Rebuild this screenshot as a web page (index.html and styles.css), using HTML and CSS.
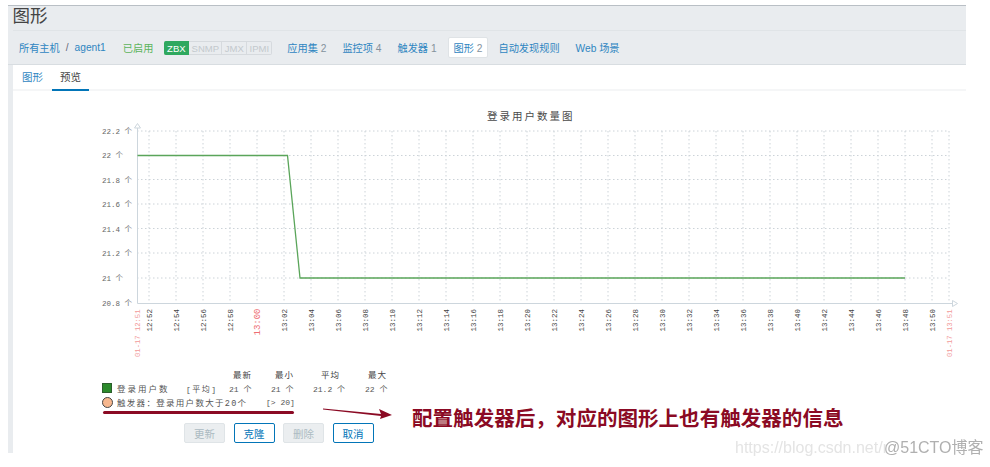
FILE: index.html
```html
<!DOCTYPE html>
<html lang="zh-CN">
<head>
  <meta charset="UTF-8">
  <meta name="viewport" content="width=device-width, initial-scale=1.0">
  <title>图形</title>
  <link rel="stylesheet" href="styles.css">
</head>
<body>
  <div class="page">
    <header class="header">
      <h1 class="title">图形</h1>
      <nav class="host-nav">
        <a class="crumb">所有主机</a>
        <span class="crumb-sep">/</span>
        <a class="crumb">agent1</a>
        <span class="enabled">已启用</span>
        <div class="badges">
          <span class="badge badge-on">ZBX</span>
          <span class="badge badge-snmp">SNMP</span>
          <span class="badge badge-jmx">JMX</span>
          <span class="badge badge-ipmi">IPMI</span>
        </div>
        <a class="nav-item nav-apps">应用集 <em>2</em></a>
        <a class="nav-item">监控项 <em>4</em></a>
        <a class="nav-item">触发器 <em>1</em></a>
        <a class="nav-item nav-current">图形 <em>2</em></a>
        <a class="nav-item">自动发现规则</a>
        <a class="nav-item">Web 场景</a>
      </nav>
    </header>

    <main class="content">
      <div class="tabs">
        <a class="tab">图形</a>
        <a class="tab tab-active">预览</a>
      </div>

      <svg class="chart" viewBox="13 91 953 276" width="953" height="276">
        <text class="chart-title" x="487" y="120">登录用户数量图</text>

        <path class="grid" d="M137 131H949M137 155.5H949M137 179.5H949M137 204H949M137 228.500H949M137 253H949M137 278H949"/>
        <path class="grid" d="M149 131V303M176 131V303M203 131V303M230 131V303M257 131V303M284 131V303M311 131V303M338 131V303M365 131V303M392 131V303M419 131V303M446 131V303M473 131V303M500 131V303M527 131V303M554 131V303M581 131V303M608 131V303M635 131V303M662 131V303M689 131V303M716 131V303M743 131V303M770 131V303M797 131V303M824 131V303M851 131V303M878 131V303M905 131V303M932 131V303M949 131V303"/>

        <path class="axis" d="M137.500 128V303.500H952"/>
        <path class="axis-arrow" d="M137.500 123.500L140.500 128H134.500Z"/>
        <path class="axis-arrow" d="M957.500 303.500L952.500 300.500V306.500Z"/>

        <path class="series" d="M137.500 155.500H287.500L300 278H905"/>

        <g class="y-labels">
          <text x="102" y="134">22.2 个</text>
          <text x="102" y="158">22 个</text>
          <text x="102" y="183">21.8 个</text>
          <text x="102" y="207">21.6 个</text>
          <text x="102" y="232">21.4 个</text>
          <text x="102" y="256">21.2 个</text>
          <text x="102" y="281">21 个</text>
          <text x="102" y="306">20.8 个</text>
        </g>

        <g class="x-labels">
          <text transform="translate(152 331.500) rotate(-90)">12:52</text>
          <text transform="translate(179 331.500) rotate(-90)">12:54</text>
          <text transform="translate(206 331.500) rotate(-90)">12:56</text>
          <text transform="translate(233 331.500) rotate(-90)">12:58</text>
          <text class="x-hour" transform="translate(260 335.500) rotate(-90)">13:00</text>
          <text transform="translate(287 331.500) rotate(-90)">13:02</text>
          <text transform="translate(314 331.500) rotate(-90)">13:04</text>
          <text transform="translate(341 331.500) rotate(-90)">13:06</text>
          <text transform="translate(368 331.500) rotate(-90)">13:08</text>
          <text transform="translate(395 331.500) rotate(-90)">13:10</text>
          <text transform="translate(422 331.500) rotate(-90)">13:12</text>
          <text transform="translate(449 331.500) rotate(-90)">13:14</text>
          <text transform="translate(476 331.500) rotate(-90)">13:16</text>
          <text transform="translate(503 331.500) rotate(-90)">13:18</text>
          <text transform="translate(530 331.500) rotate(-90)">13:20</text>
          <text transform="translate(557 331.500) rotate(-90)">13:22</text>
          <text transform="translate(584 331.500) rotate(-90)">13:24</text>
          <text transform="translate(611 331.500) rotate(-90)">13:26</text>
          <text transform="translate(638 331.500) rotate(-90)">13:28</text>
          <text transform="translate(665 331.500) rotate(-90)">13:30</text>
          <text transform="translate(692 331.500) rotate(-90)">13:32</text>
          <text transform="translate(719 331.500) rotate(-90)">13:34</text>
          <text transform="translate(746 331.500) rotate(-90)">13:36</text>
          <text transform="translate(773 331.500) rotate(-90)">13:38</text>
          <text transform="translate(800 331.500) rotate(-90)">13:40</text>
          <text transform="translate(827 331.500) rotate(-90)">13:42</text>
          <text transform="translate(854 331.500) rotate(-90)">13:44</text>
          <text transform="translate(881 331.500) rotate(-90)">13:46</text>
          <text transform="translate(908 331.500) rotate(-90)">13:48</text>
          <text transform="translate(935 331.500) rotate(-90)">13:50</text>
          <text class="x-edge" transform="translate(140 357) rotate(-90)">01-17 12:51</text>
          <text class="x-edge" transform="translate(952 357) rotate(-90)">01-17 13:51</text>
        </g>
      </svg>

      <div class="legend">
        <div class="legend-row legend-head">
          <span>最新</span>
          <span>最小</span>
          <span>平均</span>
          <span>最大</span>
        </div>
        <div class="legend-row">
          <i class="swatch"></i>
          <span class="legend-name">登录用户数</span>
          <span class="legend-func">[平均]</span>
          <span class="legend-val">21 个</span>
          <span class="legend-val">21 个</span>
          <span class="legend-val legend-val-wide">21.2 个</span>
          <span class="legend-val">22 个</span>
        </div>
        <div class="legend-row legend-trigger">
          <i class="dot"></i>
          <span class="trigger-name">触发器：登录用户数大于20个</span>
          <span class="trigger-cond">[&gt; 20]</span>
        </div>
      </div>

      <div class="actions">
        <button class="btn" disabled>更新</button>
        <button class="btn">克隆</button>
        <button class="btn" disabled>删除</button>
        <button class="btn">取消</button>
      </div>
    </main>

    <div class="mark-line"></div>
    <svg class="mark-arrow" viewBox="0 0 72 14" width="72" height="14">
      <path d="M0 1.500L58 7L56 2L69 8L57 12L58 9L0 2.500Z"/>
    </svg>
    <div class="note">配置触发器后，对应的图形上也有触发器的信息</div>
    <div class="watermark">https://blog.csdn.net/r<b>@51CTO博客</b></div>
  </div>
</body>
</html>
```

FILE: styles.css
```css
body {
  margin: 0;
  background-color: white;
  font-family: "Liberation Sans", "Noto Sans CJK SC", sans-serif;
}
.page {
  position: relative;
  width: 958px;
  height: 467px;
  margin-left: 8px;
  padding-top: 5px;
  box-sizing: border-box;
  filter: blur(.3px);
}
.header {
  background-color: #e9ecef;
  border-top: 1px solid #b9bfc5;
  border-bottom: 1px solid #d8dde1;
}
.title {
  margin: 0 0 0 4.500px;
  height: 24px;
  border-bottom: 1px solid #e0e4e7;
  font-size: 17.500px;
  font-weight: normal;
  line-height: 20px;
  color: #444;
}
.host-nav {
  display: flex;
  align-items: center;
  height: 33px;
  padding-left: 11px;
  font-size: 10.200px;
  color: #2f86c1;
}
.crumb-sep {
  margin: 0 6px;
  color: #667;
}
.enabled {
  margin-left: 17px;
  color: #5cb45c;
}
.badges {
  display: flex;
  margin-left: 11px;
  font-size: 9.500px;
}
.badge {
  height: 14px;
  line-height: 13px;
  box-sizing: border-box;
  text-align: center;
  color: #c3c9cd;
  border: 1px solid #d6dade;
  border-left: 0;
}
.badge-on {
  width: 25px;
  background-color: #2fa85f;
  border-color: #2fa85f;
  border-radius: 2px 0 0 2px;
  color: white;
}
.badge-snmp { width: 33px; }
.badge-jmx { width: 25px; }
.badge-ipmi { width: 25px; border-radius: 0 2px 2px 0; }
.nav-item {
  margin-left: 16px;
  white-space: nowrap;
}
.nav-item em {
  font-style: normal;
  color: #84929c;
}
.nav-apps { margin-left: 15px; }
.nav-current {
  margin-left: 11px;
  margin-right: -6px;
  padding: 2px 5px;
  background-color: white;
  border: 1px solid #dfe3e6;
  border-radius: 2px;
}
.content {
  height: 388px;
  border-left: 5px solid #e9ecef;
  background-color: white;
}
.tabs {
  display: flex;
  height: 26px;
  padding-left: 9px;
  box-sizing: border-box;
  border-bottom: 2px solid #f5f6f7;
  font-size: 10.500px;
  line-height: 24px;
  color: #2f86c1;
}
.tab {
  width: 30px;
}
.tab-active {
  width: 37px;
  height: 26px;
  box-sizing: border-box;
  text-align: center;
  color: #444;
  border-bottom: 2px solid #0275b8;
}
.chart {
  display: block;
}
.chart text {
  font-family: "Liberation Mono", "Noto Sans CJK SC", monospace;
}
.chart .chart-title {
  font-family: "Liberation Serif", "Noto Sans CJK SC", serif;
  font-size: 10.500px;
  letter-spacing: 2px;
  fill: #4a4a4a;
}
.grid {
  fill: none;
  stroke: #ccd3d8;
  stroke-width: 1;
  stroke-dasharray: 1.500 2.500;
}
.axis {
  fill: none;
  stroke: #cdd6dd;
  stroke-width: 1;
}
.axis-arrow {
  fill: white;
  stroke: #cdd6dd;
  stroke-width: 1;
}
.series {
  fill: none;
  stroke: #5aa55a;
  stroke-width: 1.300;
}
.y-labels text {
  font-size: 7.500px;
  fill: #666;
}
.x-labels text {
  font-size: 7.500px;
  fill: #444;
}
.x-labels .x-hour {
  font-size: 9px;
  fill: #ee6e73;
}
.x-labels .x-edge {
  font-size: 7.200px;
  fill: #f29a9a;
}
.legend {
  padding-top: 1px;
  padding-left: 89px;
  font-family: "Liberation Mono", "Noto Sans CJK SC", monospace;
  font-size: 8px;
  color: #555;
}
.legend-row {
  display: flex;
  align-items: center;
  height: 14px;
}
.legend-head {
  height: 13px;
  padding-left: 131px;
  font-size: 8.500px;
  color: #444;
}
.legend-head span {
  width: 42px;
  letter-spacing: 1px;
}
.legend-head span:nth-child(2) { width: 46px; }
.legend-head span:nth-child(3) { width: 47px; }
.swatch {
  width: 10px;
  height: 10px;
  margin-right: 5px;
  box-sizing: border-box;
  background-color: #2b8a2b;
  border: 1px solid #2c5e2c;
}
.legend-name {
  width: 69px;
  font-size: 8.500px;
  letter-spacing: 2px;
}
.legend-func {
  width: 43px;
  letter-spacing: 1.500px;
}
.legend-val {
  width: 42px;
}
.legend-val-wide {
  width: 52px;
}
.legend-trigger {
  height: 15px;
}
.dot {
  width: 11px;
  height: 11px;
  margin-right: 4px;
  box-sizing: border-box;
  border-radius: 50%;
  background-color: #f7b78e;
  border: 1px solid #444;
}
.trigger-name {
  width: 149px;
  font-size: 8.500px;
  letter-spacing: 1.300px;
}
.actions {
  display: flex;
  gap: 8.500px;
  margin-top: 13px;
  padding-left: 171px;
}
.btn {
  width: 41px;
  height: 20px;
  padding: 0;
  box-sizing: border-box;
  background-color: white;
  border: 1px solid #0275b8;
  border-radius: 2px;
  font-family: inherit;
  font-size: 10.500px;
  color: #0275b8;
}
.btn:disabled {
  background-color: #ebeef0;
  border-color: #dfe4e7;
  color: #acbbc2;
}
/* hand drawn marks on top of the screenshot */
.mark-line {
  position: absolute;
  left: 95px;
  top: 411px;
  width: 191px;
  height: 3px;
  border-radius: 2px;
  background-color: #8b0a24;
}
.mark-arrow {
  position: absolute;
  left: 315px;
  top: 407px;
  fill: #8b0a24;
}
.note {
  position: absolute;
  left: 404px;
  top: 406px;
  font-size: 20.550px;
  font-weight: bold;
  line-height: 26px;
  white-space: nowrap;
  color: #8b0a24;
}
.watermark {
  position: absolute;
  left: 727px;
  top: 438px;
  font-size: 16px;
  line-height: 20px;
  white-space: nowrap;
  color: #e4e4e4;
}
.watermark b {
  margin-left: -4px;
  font-weight: normal;
  color: #b0b0b0;
}
```
